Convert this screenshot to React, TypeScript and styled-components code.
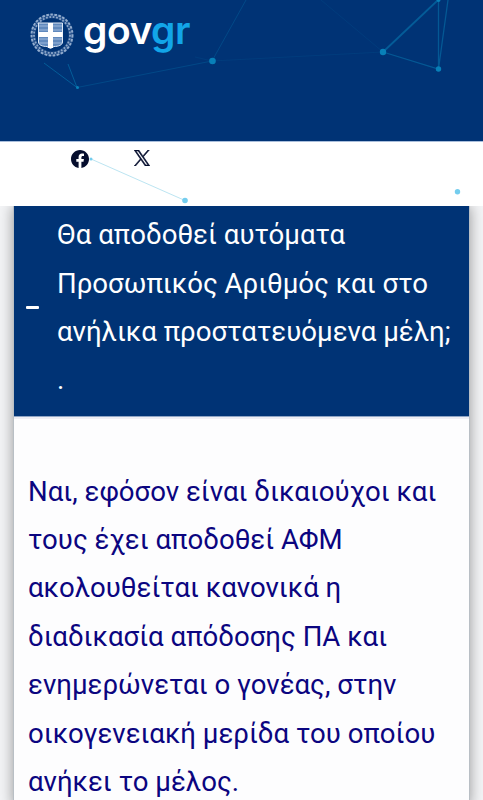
import styled, { createGlobalStyle } from 'styled-components';

const GlobalStyle = createGlobalStyle`
  * {
    box-sizing: border-box;
  }
  body {
    margin: 0;
    overflow: hidden;
    background: #f3f4f6;
    font-family: Roboto, "Noto Sans", sans-serif;
  }
`

const Page = styled.div`
  position: relative;
  display: flex;
  flex-direction: column;
  width: 100%;
  height: 800px;
  overflow: hidden;
`

const Header = styled.header`
  display: flex;
  align-items: flex-start;
  flex: none;
  height: 141px;
  padding: 11px 0 0 29px;
  background: #003375;
`

const Logo = styled.div`
  display: flex;
  gap: 7px;
`

const Wordmark = styled.span`
  display: block;
  margin-top: -4px;
  color: #fff;
  font: 600 39px/46px Inter, sans-serif;
  letter-spacing: -0.5px;
  span {
    color: #12a5e8;
  }
`

const Network = styled.svg`
  position: absolute;
  top: 0;
  left: 0;
  z-index: 2;
  pointer-events: none;
`

const ShareBar = styled.nav`
  position: relative;
  z-index: 1;
  display: flex;
  flex: none;
  gap: 45px;
  height: 65px;
  padding: 8px 0 0 71px;
  background: #fff;
  border-top: 1px solid #a9bedb;
  svg {
    display: block;
  }
`

const Panel = styled.main`
  flex: 1;
  display: flex;
  flex-direction: column;
  margin: 0 13px;
  background: #fdfdfe;
  border: 1px solid #b9bfc5;
  border-width: 0 1px;
  box-shadow: 0 0 13px rgba(0, 0, 0, 0.38);
`

const Question = styled.button`
  display: flex;
  align-items: center;
  flex: none;
  width: 100%;
  height: 211px;
  padding: 0 0 0 12px;
  border: 0;
  border-bottom: 1px solid #8fa5c5;
  background: #003375;
  color: #fff;
  font-family: inherit;
  text-align: left;
`

const Minus = styled.span`
  flex: none;
  width: 13px;
  height: 3px;
  margin: -8px 18px 0 0;
  border-radius: 1px;
  background: #fff;
`

const Title = styled.span`
  margin-top: -6px;
`

const Answer = styled.section`
  padding: 48.5px 0 0 14px;
  border-top: 2px solid #eeeef4;
  color: #0b0580;
`

const Line = styled.span`
  display: block;
  font-size: 27.6px;
  line-height: 48.4px;
  white-space: nowrap;
`

const title = [
  'Θα αποδοθεί αυτόματα',
  'Προσωπικός Αριθμός και στο',
  'ανήλικα προστατευόμενα μέλη;',
  '.',
]

const answer = [
  'Ναι, εφόσον είναι δικαιούχοι και',
  'τους έχει αποδοθεί ΑΦΜ',
  'ακολουθείται κανονικά η',
  'διαδικασία απόδοσης ΠΑ και',
  'ενημερώνεται ο γονέας, στην',
  'οικογενειακή μερίδα του οποίου',
  'ανήκει το μέλος.',
]

const Emblem = () => (
  <svg width="47" height="48" viewBox="0 0 47 48" fill="none">
    <circle cx="23" cy="24" r="19" stroke="#b4c9e6" strokeWidth="4.500" opacity="0.2" />
    <circle cx="23" cy="24" r="20.500" stroke="#c3d4eb" strokeWidth="2" strokeDasharray="2.600 1.500" opacity="0.7" />
    <circle cx="23" cy="24" r="18" stroke="#c3d4eb" strokeWidth="1.800" strokeDasharray="1.800 1.600" opacity="0.65" />
    <path d="M9.500 12h24v19c0 3-4 4.500-8.500 4.500l-3.500 2-3.500-2c-4.500 0-8.500-1.500-8.500-4.500z" fill="#6089bd" stroke="#dce7f5" />
    <path d="M10 15h23M10 19h23M10 28h23M10 32h23" stroke="#9bb7db" strokeWidth="1.2" />
    <path d="M21.500 12v25M9.500 23.500h24" stroke="#fff" strokeWidth="5" />
  </svg>
)

const Facebook = () => (
  <svg width="18" height="18" viewBox="0 0 24 24" fill="#050d2d">
    <path d="M24 12.073C24 5.405 18.627 0 12 0S0 5.405 0 12.073C0 18.100 4.388 23.094 10.125 24v-8.437H7.078v-3.490h3.047V9.430c0-3.026 1.792-4.697 4.533-4.697 1.312 0 2.686.236 2.686.236v2.971h-1.513c-1.491 0-1.956.931-1.956 1.886v2.247h3.328l-.532 3.490h-2.796V24C19.612 23.094 24 18.100 24 12.073z" />
  </svg>
)

const XLogo = () => (
  <svg width="16" height="16" viewBox="0 0 24 24" fill="#050d2d" stroke="#050d2d" strokeWidth="0.9">
    <path d="M14.234 10.162 22.977 0h-2.072l-7.591 8.824L7.251 0H.258l9.168 13.343L.258 24H2.330l8.016-9.318L16.749 24h6.993zm-2.837 3.299-.929-1.329L3.076 1.560h3.182l5.965 8.532.929 1.329 7.754 11.090h-3.182z" />
  </svg>
)

const App = () => (
  <>
    <GlobalStyle />
    <Page>
      <Header>
        <Logo>
          <Emblem />
          <Wordmark>gov<span>gr</span></Wordmark>
        </Logo>
      </Header>
      <ShareBar>
        <Facebook />
        <XLogo />
      </ShareBar>
      <Panel>
        <Question>
          <Minus />
          <Title>
            {title.map((text) => <Line key={text}>{text}</Line>)}
          </Title>
        </Question>
        <Answer>
          {answer.map((text) => <Line key={text}>{text}</Line>)}
        </Answer>
      </Panel>
      <Network width="483" height="206" fill="none">
        <g stroke="#087db4">
          <path d="M44 63 77 87.500 68 64" opacity="0.55" />
          <path d="M77 87.500 212 61" opacity="0.28" />
          <path d="M212 61 246 0" opacity="0.3" />
          <path d="M195 57 212 61 383 52 321 0" opacity="0.13" />
          <path d="M383 52 438 0" strokeWidth="1.800" opacity="0.55" />
          <path d="M383 52 438.500 69V0M438.500 69 448 0" strokeWidth="1.300" opacity="0.5" />
        </g>
        <g fill="#0880b8">
          <circle cx="77.500" cy="87.500" r="1.500" />
          <circle cx="212.500" cy="61" r="3.300" />
          <circle cx="383" cy="52" r="3.200" />
          <circle cx="438.500" cy="69" r="2.700" />
          <circle cx="438.500" cy="0" r="2" />
        </g>
        <path d="M91 159 185 200.500" stroke="#bce5f2" />
        <g fill="#74cdee">
          <circle cx="91" cy="159" r="1.500" />
          <circle cx="185" cy="200.500" r="2.800" />
          <circle cx="457.500" cy="191.700" r="2.700" />
        </g>
      </Network>
    </Page>
  </>
)

export default App
